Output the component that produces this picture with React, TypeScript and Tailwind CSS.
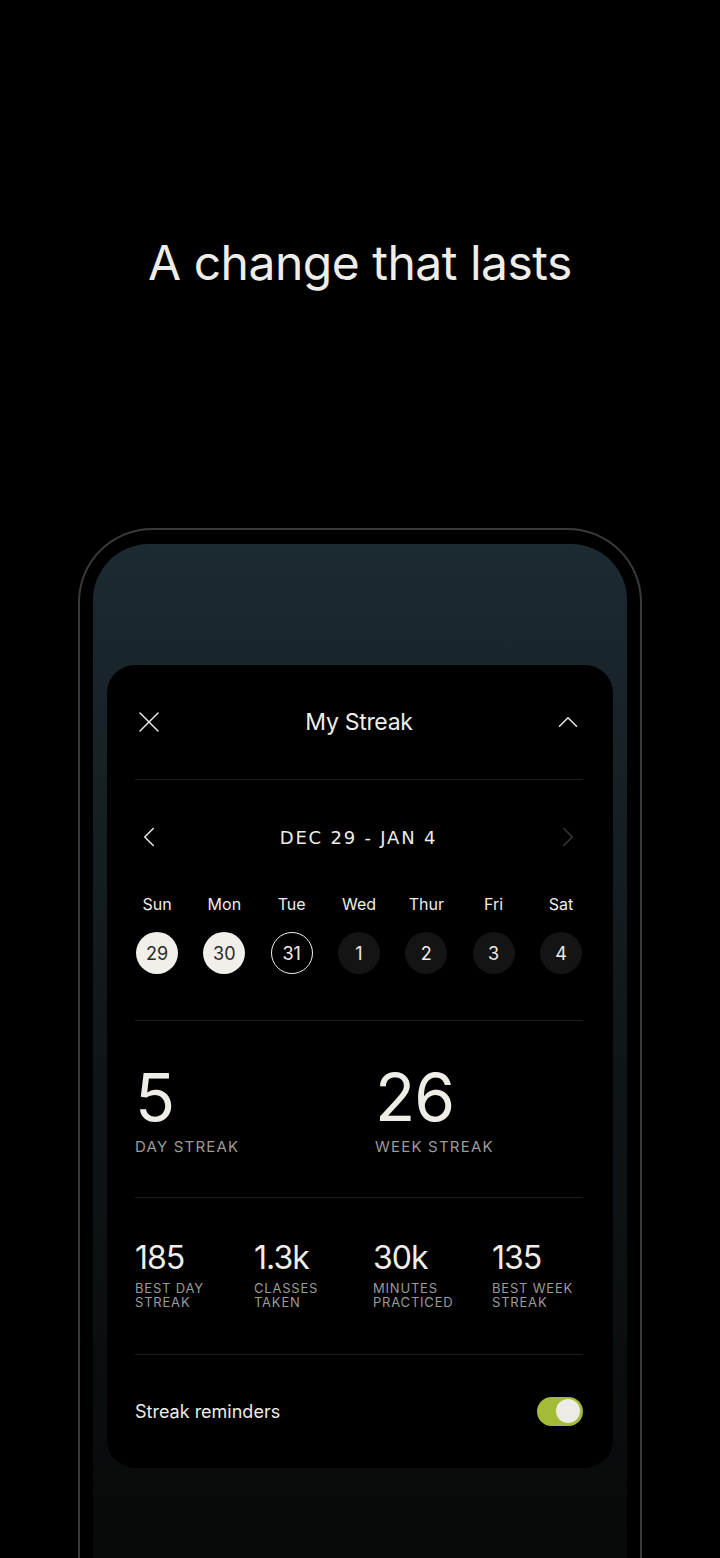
import { X, ChevronUp, ChevronLeft, ChevronRight } from "lucide-react";

const days = [
  { label: "Sun", n: "29", state: "done" },
  { label: "Mon", n: "30", state: "done" },
  { label: "Tue", n: "31", state: "today" },
  { label: "Wed", n: "1", state: "future" },
  { label: "Thur", n: "2", state: "future" },
  { label: "Fri", n: "3", state: "future" },
  { label: "Sat", n: "4", state: "future" },
];

const stats = [
  { value: "185", label: ["BEST DAY", "STREAK"] },
  { value: "1.3k", label: ["CLASSES", "TAKEN"] },
  { value: "30k", label: ["MINUTES", "PRACTICED"] },
  { value: "135", label: ["BEST WEEK", "STREAK"] },
];

function Divider() {
  return <div className="h-px bg-[#1c1c1c]" />;
}

export default function App() {
  return (
    <div
      className="w-[720px] h-[1558px] bg-black overflow-hidden flex flex-col items-center text-[#eeede8]"
      style={{ fontFamily: "Inter, 'Liberation Sans', sans-serif" }}
    >
      <h1 className="mt-[232px] text-[48px] leading-[62px] tracking-[-0.5px] font-normal">
        A change that lasts
      </h1>

      <div className="mt-[234px] w-[564px] flex-1 border-2 border-b-0 border-[#3a3a3a] rounded-t-[74px] px-[13px] pt-[14px] flex flex-col">
        <div className="flex-1 rounded-t-[56px] bg-gradient-to-b from-[#1c2a31] via-[#0f1619] to-[#080909] px-[14px] pt-[121px]">
          <div className="bg-black rounded-[28px] pl-[28px] pr-[30px] pb-[42px]">
            {/* header */}
            <div className="h-[114px] flex items-center justify-between">
              <X className="w-[36px] h-[36px] -ml-[4px]" strokeWidth={1} />
              <div className="text-[23px] tracking-[-0.3px]">My Streak</div>
              <ChevronUp className="w-[34px] h-[34px] -mr-[2px]" strokeWidth={1} />
            </div>
            <Divider />

            {/* week nav */}
            <div className="h-[114px] flex items-center justify-between">
              <ChevronLeft className="w-[34px] h-[34px] -ml-[3px]" strokeWidth={1} />
              <div className="text-[18px] tracking-[1.8px] mt-[1px]" style={{ fontFamily: "'DejaVu Sans', Inter, sans-serif" }}>
                DEC 29 - JAN 4
              </div>
              <ChevronRight className="w-[34px] h-[34px] -mr-[2px] text-[#3a3a3a]" strokeWidth={1} />
            </div>

            {/* days */}
            <div className="flex justify-between px-[1px]">
              {days.map((d) => (
                <div key={d.label} className="flex flex-col items-center w-[42px]">
                  <div className="text-[16px] leading-[20px] mb-[18px]">{d.label}</div>
                  <div
                    className={
                      d.state === "done"
                        ? "w-[42px] h-[42px] rounded-full bg-[#f0efe9] text-[#2a2a2a] flex items-center justify-center text-[18px]"
                        : d.state === "today"
                        ? "w-[42px] h-[42px] rounded-full border-[1.5px] border-[#eeede8] flex items-center justify-center text-[18px]"
                        : "w-[42px] h-[42px] rounded-full bg-[#141414] flex items-center justify-center text-[18px]"
                    }
                  >
                    {d.n}
                  </div>
                </div>
              ))}
            </div>
            <div className="h-[46px]" />
            <Divider />

            {/* streaks */}
            <div className="flex pt-[38px] pb-[38px]">
              <div className="w-[240px] shrink-0">
                <div className="text-[66px] leading-[76px] tracking-[-1px]">5</div>
                <div className="text-[15px] tracking-[1.2px] text-[#9b9b98] mt-[1px]">DAY STREAK</div>
              </div>
              <div>
                <div className="text-[66px] leading-[76px] tracking-[-1px]">26</div>
                <div className="text-[15px] tracking-[1.2px] text-[#9b9b98] mt-[1px]">WEEK STREAK</div>
              </div>
            </div>
            <Divider />

            {/* other stats */}
            <div className="flex pt-[40px] pb-[45px]">
              {stats.map((s) => (
                <div key={s.value} className="w-[119px] shrink-0">
                  <div className="text-[32px] leading-[40px] tracking-[-1px]">{s.value}</div>
                  <div className="text-[13px] leading-[14px] tracking-[0.8px] text-[#9b9b98] mt-[3px]">
                    {s.label[0]}
                    <br />
                    {s.label[1]}
                  </div>
                </div>
              ))}
            </div>
            <Divider />

            {/* reminders */}
            <div className="flex items-center justify-between pt-[42px]">
              <div className="text-[18px]">Streak reminders</div>
              <div className="w-[46px] h-[29px] rounded-full bg-[#a3bb37] flex items-center justify-end px-[3px]">
                <div className="w-[24px] h-[24px] rounded-full bg-[#ecebe6]" />
              </div>
            </div>
          </div>
        </div>
      </div>
    </div>
  );
}
